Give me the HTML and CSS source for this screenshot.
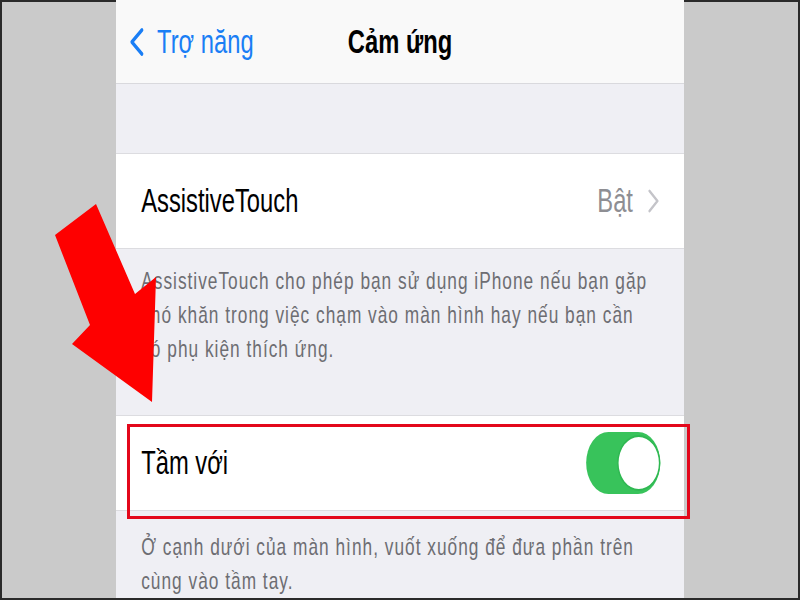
FILE: index.html
```html
<!DOCTYPE html>
<html lang="vi">
<head>
  <meta charset="UTF-8">
  <meta name="viewport" content="width=device-width, initial-scale=1.0">
  <title>Cảm ứng</title>
  <link rel="stylesheet" href="styles.css">
</head>
<body>
  <div class="frame">
    <div class="phone">
      <div class="screen">
        <header class="nav">
          <a class="nav-back">
            <svg class="back-chevron" viewBox="0 0 24 30"><path d="M19 3 L5 15 L19 27"/></svg>
            <span>Trợ năng</span>
          </a>
          <h1 class="nav-title">Cảm ứng</h1>
          <span></span>
        </header>

        <div class="spacer"></div>

        <div class="group">
          <div class="cell">
            <span class="cell-label">AssistiveTouch</span>
            <span class="cell-detail">
              Bật
              <svg class="disclosure" viewBox="0 0 19 24"><path d="M4 2 L15 12 L4 22"/></svg>
            </span>
          </div>
        </div>
        <p class="footer">AssistiveTouch cho phép bạn sử dụng iPhone nếu bạn gặp khó khăn trong việc chạm vào màn hình hay nếu bạn cần có phụ kiện thích ứng.</p>

        <div class="group">
          <div class="cell">
            <span class="cell-label">Tầm với</span>
            <span class="switch on"><span class="knob"></span></span>
          </div>
        </div>
        <p class="footer footer-last">Ở cạnh dưới của màn hình, vuốt xuống để đưa phần trên cùng vào tầm tay.</p>
      </div>
    </div>

    <!-- annotation: arrow pointing at the reach row -->
    <svg class="arrow" viewBox="0 0 110 210">
      <polygon points="46,4 5,35 40,125 22,144 102,202 106,77 85,94"/>
    </svg>
    <div class="highlight"></div>
  </div>
</body>
</html>
```

FILE: styles.css
```css
body {
  margin: 0;
  font-family: "Liberation Sans", "Noto Sans", sans-serif;
}
.frame {
  position: relative;
  width: 800px;
  height: 600px;
  background: #cacaca;
  display: flex;
  justify-content: center;
  overflow: hidden;
  outline: 2px solid #2a2a2a;
  outline-offset: -2px;
}
.phone {
  width: 568px;
  height: 100%;
  overflow: hidden;
  background: #efeff4;
}
/* the capture is squeezed horizontally, so lay out wide and compress */
.screen {
  width: 789px;
  transform: scaleX(0.72);
  transform-origin: 0 0;
}
.nav {
  height: 83px;
  background: #f9f9f9;
  border-bottom: 1px solid #d9d9dd;
  display: grid;
  grid-template-columns: 1fr auto 1fr;
  align-items: center;
}
.nav-back {
  display: flex;
  align-items: center;
  gap: 16px;
  padding-left: 17px;
  color: #1a7ef5;
  font-size: 33px;
}
.back-chevron {
  width: 24px;
  height: 30px;
  fill: none;
  stroke: #1a7ef5;
  stroke-width: 4;
  stroke-linecap: round;
  stroke-linejoin: round;
}
.nav-title {
  margin: 0;
  font-size: 33px;
  font-weight: bold;
  color: #000;
}
.spacer {
  height: 69px;
}
.group {
  background: #fff;
  border-top: 1px solid #dcdce0;
  border-bottom: 1px solid #dcdce0;
}
.cell {
  height: 94px;
  padding: 0 33px 0 35px;
  display: flex;
  align-items: center;
  justify-content: space-between;
  font-size: 33px;
  color: #000;
}
.cell-detail {
  display: flex;
  align-items: center;
  gap: 19px;
  color: #8e8e93;
}
.disclosure {
  width: 19px;
  height: 24px;
  fill: none;
  stroke: #c4c4c9;
  stroke-width: 3;
  stroke-linecap: round;
  stroke-linejoin: round;
}
.switch {
  width: 103px;
  height: 62px;
  border-radius: 31px;
  background: #e9e9ea;
  display: flex;
  align-items: center;
  justify-content: flex-start;
}
.switch.on {
  background: #38c35b;
  justify-content: flex-end;
}
.knob {
  width: 60px;
  height: 56px;
  box-sizing: border-box;
  border-radius: 50%;
  background: #fff;
  border: 2px solid #2fb852;
}
.footer {
  margin: 0;
  padding: 15px 40px 49px 35px;
  font-size: 24px;
  line-height: 34px;
  letter-spacing: 1.4px;
  color: #6d6d72;
}
.footer-last {
  padding-top: 19px;
}
.arrow {
  position: absolute;
  left: 50px;
  top: 200px;
  width: 110px;
  height: 210px;
  fill: #fe0000;
}
.highlight {
  position: absolute;
  left: 127px;
  top: 424px;
  width: 563px;
  height: 95px;
  box-sizing: border-box;
  border: 3px solid #e3071b;
}
```
